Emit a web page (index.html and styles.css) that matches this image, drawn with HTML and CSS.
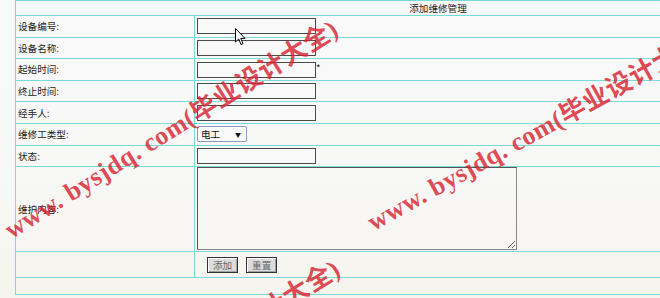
FILE: index.html
```html
<!DOCTYPE html>
<html lang="zh-CN">
<head>
    <meta charset="UTF-8">
    <title>添加维修管理</title>
    <link rel="stylesheet" href="styles.css">
</head>
<body>
    <form class="repair-form">
        <table class="form-table">
            <tr class="row-title">
                <td colspan="2">添加维修管理</td>
            </tr>
            <tr>
                <td class="label">设备编号:</td>
                <td><input type="text" class="field"></td>
            </tr>
            <tr>
                <td class="label">设备名称:</td>
                <td><input type="text" class="field"></td>
            </tr>
            <tr>
                <td class="label">起始时间:</td>
                <td><input type="text" class="field"><span class="star">*</span></td>
            </tr>
            <tr>
                <td class="label">终止时间:</td>
                <td><input type="text" class="field"></td>
            </tr>
            <tr>
                <td class="label">经手人:</td>
                <td><input type="text" class="field"></td>
            </tr>
            <tr>
                <td class="label">维修工类型:</td>
                <td>
                    <span class="select-wrap">
                        <select class="select">
                            <option>电工</option>
                            <option>机修工</option>
                        </select>
                    </span>
                </td>
            </tr>
            <tr>
                <td class="label">状态:</td>
                <td><input type="text" class="field"></td>
            </tr>
            <tr class="row-area">
                <td class="label">维护内容:</td>
                <td><textarea class="area"></textarea></td>
            </tr>
            <tr class="row-buttons">
                <td></td>
                <td>
                    <input type="button" class="btn" value="添加">
                    <input type="button" class="btn" value="重置">
                </td>
            </tr>
            <tr class="row-foot">
                <td colspan="2"></td>
            </tr>
        </table>
    </form>

    <!-- 水印 -->
    <div class="watermark wm-1">www. bysjdq. com(毕业设计大全)</div>
    <div class="watermark wm-2">www. bysjdq. com(毕业设计大全)</div>
    <div class="watermark wm-3">www. bysjdq. com(毕业设计大全)</div>

    <svg class="cursor" width="12" height="18" viewBox="0 0 12 18">
        <path d="M0.5 0.5 L0.5 14 L3.7 11 L6 16.5 L8 15.6 L5.8 10.4 L10 10.4 Z" fill="#fff" stroke="#000" stroke-width="1"/>
    </svg>
</body>
</html>
```

FILE: styles.css
```css
/* 页面 */
html {
    background: linear-gradient(#f9f9fa, #f8f8f7 55%, #f6f4ee);
    min-height: 100%;
}

body {
    margin: 0;
    padding: 0 0 0 15px;
    overflow: hidden;
    font-family: "Noto Sans CJK SC", sans-serif;
    font-size: 9.6px;
    color: #222;
}

.repair-form {
    margin: 0;
}

/* 表格 */
.form-table {
    border-collapse: collapse;
    width: 846px;
    border: 1px solid #7ad9d9;
}

.form-table td {
    border: 1px solid #7ad9d9;
    padding: 0 2px;
    height: 20.6px;
    vertical-align: middle;
}

.form-table td.label {
    width: 174px;
}

.row-title td {
    height: 14px;
    text-align: center;
}

.row-area td {
    height: 84px;
}

.row-buttons td {
    height: 25px;
}

.row-foot td {
    height: 16px;
}

/* 输入框 */
.field {
    width: 119px;
    height: 16px;
    box-sizing: border-box;
    margin: 0;
    padding: 0 2px;
    border: 1px solid #4a4a4a;
    background: #f9f9f9;
    vertical-align: middle;
    font-size: 9.6px;
}

.star {
    font-size: 9.6px;
    vertical-align: 1px;
}

.select-wrap {
    position: relative;
    display: inline-block;
    vertical-align: middle;
}

.select-wrap::after {
    content: "▼";
    position: absolute;
    right: 6px;
    top: 4px;
    font-size: 6px;
    color: #111;
    pointer-events: none;
}

.select {
    -webkit-appearance: none;
    appearance: none;
    width: 50px;
    height: 16px;
    box-sizing: border-box;
    padding: 0 0 0 3px;
    border: 1px solid #8b9bc4;
    border-radius: 2px;
    background: #fafafa;
    font-family: "Noto Sans CJK SC", sans-serif;
    font-size: 9.6px;
    color: #111;
}

.area {
    display: block;
    width: 320px;
    height: 83px;
    box-sizing: border-box;
    margin: 0 0 1px 0;
    border: 1px solid #555;
    border-right-color: #888;
    border-bottom-color: #888;
    background: transparent;
}

/* 按钮 */
.btn {
    width: 31px;
    height: 16px;
    box-sizing: border-box;
    padding: 0;
    margin: 0 0 0 10px;
    border: 1px solid #333;
    background: #dcdcdc;
    box-shadow: inset 1px 1px 0 #fff, inset -1px -1px 0 #a0a0a0;
    color: #666;
    font-family: "Noto Sans CJK SC", sans-serif;
    font-size: 9.6px;
    vertical-align: middle;
}

.btn + .btn {
    margin-left: 6px;
}

/* 水印 */
.watermark {
    position: absolute;
    white-space: nowrap;
    font-family: "Liberation Serif", "Noto Sans CJK SC", serif;
    font-weight: bold;
    font-size: 26px;
    line-height: 26px;
    letter-spacing: 0.5px;
    color: rgba(216, 36, 48, 0.82);
    transform: rotate(-32deg);
    transform-origin: 0 22px;
    pointer-events: none;
}

.wm-1 {
    left: 12px;
    top: 218px;
}

.wm-2 {
    left: 374px;
    top: 210px;
    transform: rotate(-29deg);
}

.wm-3 {
    left: 14px;
    top: 458px;
}

.cursor {
    position: absolute;
    left: 235px;
    top: 28px;
}
```
